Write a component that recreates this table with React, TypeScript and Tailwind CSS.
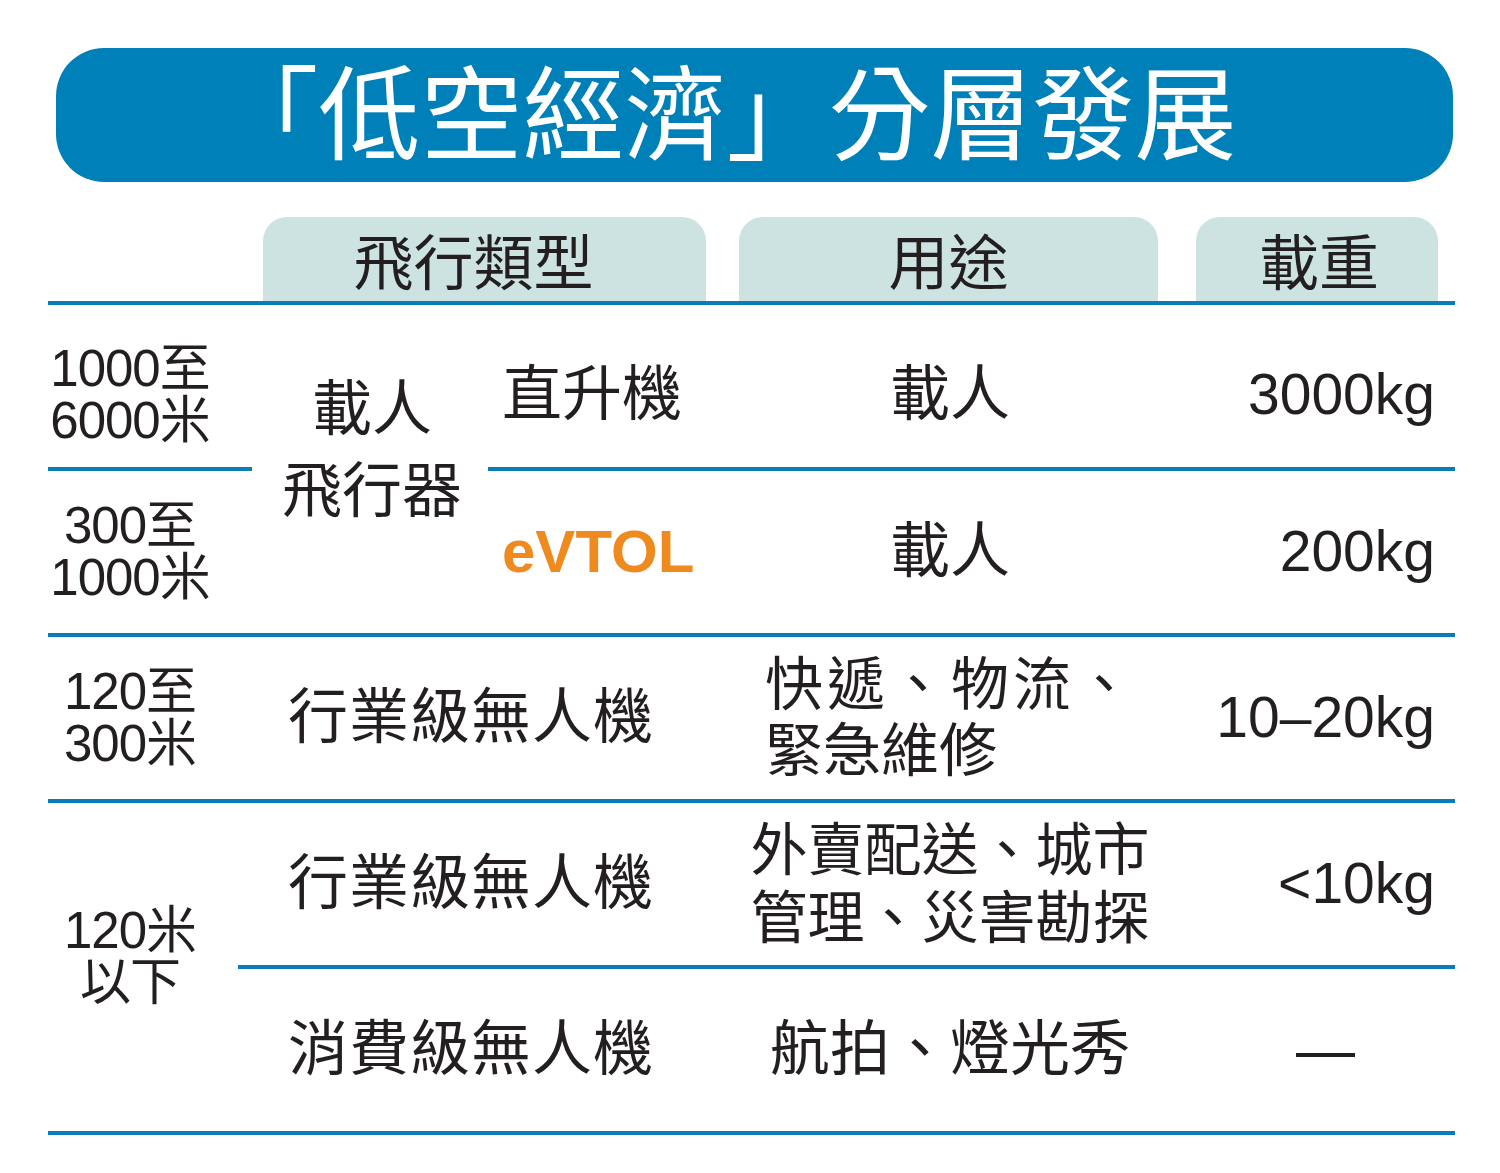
import React from "react";

const cell = "flex items-center border-b-4 border-[#0a7db8]";
const alt = "flex flex-col items-center justify-center whitespace-nowrap text-[51px] leading-[52px] tracking-[-1px] border-b-4 border-[#0a7db8]";
const wt = "flex items-center justify-end pr-[20px] text-[57px] whitespace-nowrap border-b-4 border-[#0a7db8]";
const use = "flex items-center justify-center whitespace-nowrap border-b-4 border-[#0a7db8] text-[60px]";

export default function App() {
  return (
    <div className="w-[1500px] h-[1173px] bg-white text-[#231f20] font-['Liberation_Sans','Noto_Sans_CJK_TC',sans-serif]">
      <div className="pt-[48px] pl-[48px] w-[1455px]">
        <div className="ml-[8px] mr-[2px] h-[134px] pr-[56px] pb-[14px] rounded-[48px] bg-[#0080b9] flex items-center justify-center text-white text-[102px] leading-none font-normal whitespace-nowrap font-['Noto_Sans_CJK_TC',sans-serif]">
          「低空經濟」分層發展
        </div>

        <div className="mt-[35px] h-[88px] flex items-end border-b-4 border-[#0a7db8] font-['Noto_Sans_CJK_TC',sans-serif]">
          <div className="ml-[215px] w-[443px] h-full pr-[22px] rounded-t-[24px] bg-[#cde3e2] flex items-center justify-center text-[60px] leading-none">
            飛行類型
          </div>
          <div className="ml-[33px] w-[419px] h-full rounded-t-[24px] bg-[#cde3e2] flex items-center justify-center text-[60px] leading-none">
            用途
          </div>
          <div className="ml-[38px] w-[242px] h-full pl-[4px] rounded-t-[24px] bg-[#cde3e2] flex items-center justify-center text-[60px] leading-none">
            載重
          </div>
        </div>

        <div className="grid grid-cols-[190px_250px_252px_420px_295px] grid-rows-[repeat(5,166px)]">
          {/* Row 1 */}
          <div className={`${alt} -mr-[14px] pr-[40px] pt-[18px]`}>
            <span>1000至</span>
            <span>6000米</span>
          </div>
          <div className="row-span-2 flex flex-col items-center pl-[18px] pt-[64px] text-[60px] leading-[82px] border-b-4 border-[#0a7db8]">
            <span>載人</span>
            <span>飛行器</span>
          </div>
          <div className={`${cell} pl-[14px] pt-[18px] text-[60px]`}>直升機</div>
          <div className={`${use} pt-[18px]`}>載人</div>
          <div className={`${wt} pt-[18px]`}>3000kg</div>

          {/* Row 2 */}
          <div className={`${alt} pr-[26px]`}>
            <span>300至</span>
            <span>1000米</span>
          </div>
          <div className={`${cell} pl-[14px] text-[60px] font-bold text-[#ef8a1f]`}>eVTOL</div>
          <div className={use}>載人</div>
          <div className={wt}>200kg</div>

          {/* Row 3 */}
          <div className={`${alt} pr-[26px]`}>
            <span>120至</span>
            <span>300米</span>
          </div>
          <div className={`${cell} col-span-2 pl-[50px] text-[60px] tracking-[1px]`}>行業級無人機</div>
          <div className={use}>
            <div className="text-left text-[58px] leading-[66px] pl-[2px]">
              <div className="tracking-[4px]">快遞、物流、</div>
              <div>緊急維修</div>
            </div>
          </div>
          <div className={wt}>10–20kg</div>

          {/* Row 4 */}
          <div className={`${alt} row-span-2 pr-[26px] pb-[20px]`}>
            <span>120米</span>
            <span>以下</span>
          </div>
          <div className={`${cell} col-span-2 pl-[50px] text-[60px] tracking-[1px]`}>行業級無人機</div>
          <div className={use}>
            <div className="text-left text-[57px] leading-[68px]">
              <div>外賣配送、城市</div>
              <div>管理、災害勘探</div>
            </div>
          </div>
          <div className={wt}>&lt;10kg</div>

          {/* Row 5 */}
          <div className={`${cell} col-span-2 pl-[50px] text-[60px] tracking-[1px]`}>消費級無人機</div>
          <div className={use}>
            <div className="text-left text-[60px]">航拍、燈光秀</div>
          </div>
          <div className={`${wt} pr-[100px] text-[59px]`}>—</div>
        </div>
      </div>
    </div>
  );
}
